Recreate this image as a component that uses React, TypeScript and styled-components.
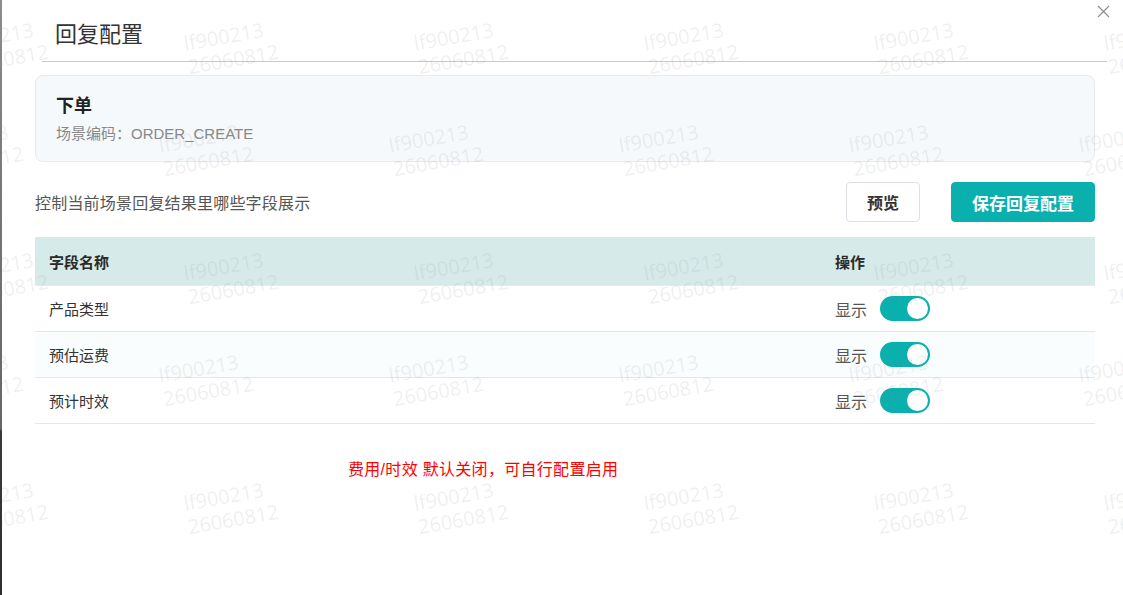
import React, { useState } from 'react'
import styled, { createGlobalStyle } from 'styled-components'

const GlobalStyle = createGlobalStyle`
  html, body {
    margin: 0;
    padding: 0;
  }
  body {
    width: 1123px;
    height: 595px;
    overflow: hidden;
    font-family: 'Liberation Sans', 'Noto Sans CJK SC', sans-serif;
    background: linear-gradient(
      180deg,
      #8c8c8c 0%,
      #767676 35%,
      #666 72%,
      #3a3a3a 72.5%,
      #2e2e2e 100%
    );
  }
`

type Field = { name: string; visible: boolean }

const initialFields: Field[] = [
  { name: '产品类型', visible: true },
  { name: '预估运费', visible: true },
  { name: '预计时效', visible: true },
]

const App = (): JSX.Element => {
  const [fields, setFields] = useState(initialFields)

  const toggle = (index: number) => {
    setFields(prev =>
      prev.map((f, i) => (i === index ? { ...f, visible: !f.visible } : f))
    )
  }

  // watermark stamps, two staggered rows per 230px block
  const stamps: { x: number; y: number }[] = []
  for (let k = 0; k < 3; k++) {
    for (let i = 0; i < 6; i++) {
      stamps.push({ x: -48 + 230 * i, y: 32 + 230 * k })
      if (k < 2) stamps.push({ x: -73 + 230 * i, y: 134 + 230 * k })
    }
  }

  return (
    <>
      <GlobalStyle />
      <Modal>
        <Header>
          <Title>回复配置</Title>
          <CloseButton aria-label="close">
            <svg width="13" height="13" viewBox="0 0 13 13">
              <path d="M1 1L12 12M12 1L1 12" stroke="#8f8f8f" strokeWidth="1.2" />
            </svg>
          </CloseButton>
        </Header>
        <Body>
          <SceneCard>
            <SceneName>下单</SceneName>
            <SceneCode>场景编码：ORDER_CREATE</SceneCode>
          </SceneCard>
          <Toolbar>
            <Hint>控制当前场景回复结果里哪些字段展示</Hint>
            <Actions>
              <Button>预览</Button>
              <Button $primary>保存回复配置</Button>
            </Actions>
          </Toolbar>
          <Table>
            <HeadRow>
              <Cell $head>字段名称</Cell>
              <Cell $head>操作</Cell>
            </HeadRow>
            {fields.map((f, i) => (
              <Row key={f.name} $striped={i % 2 === 1}>
                <Cell>{f.name}</Cell>
                <Cell>
                  <ShowLabel>显示</ShowLabel>
                  <Switch
                    role="switch"
                    aria-checked={f.visible}
                    $on={f.visible}
                    onClick={() => toggle(i)}
                  >
                    <Knob $on={f.visible} />
                  </Switch>
                </Cell>
              </Row>
            ))}
          </Table>
          <Note>费用/时效 默认关闭，可自行配置启用</Note>
        </Body>
        <Watermark>
          {stamps.map((s, i) => (
            <Stamp key={i} style={{ left: s.x, top: s.y }}>
              <span>lf900213</span>
              <span>26060812</span>
            </Stamp>
          ))}
        </Watermark>
      </Modal>
    </>
  )
}

export default App

const Modal = styled.div`
  position: relative;
  margin-left: 2px;
  width: 1121px;
  height: 595px;
  background: #fff;
  overflow: hidden;
`
const Header = styled.div`
  display: flex;
  justify-content: space-between;
  align-items: center;
  height: 61px;
  margin: 0 16px 0 40px;
  padding-left: 13px;
  border-bottom: 1px solid #c9c9c9;
`
const Title = styled.h2`
  margin: 3px 0 0;
  font-size: 22px;
  font-weight: 400;
  color: #333;
`
const CloseButton = styled.button`
  align-self: flex-start;
  margin: 5px -3px 0 0;
  padding: 0;
  width: 13px;
  height: 13px;
  border: none;
  background: none;
  display: flex;
  cursor: pointer;
`
const Body = styled.div`
  padding: 13px 28px 0 33px;
`
const SceneCard = styled.div`
  box-sizing: border-box;
  height: 87px;
  display: flex;
  flex-direction: column;
  justify-content: center;
  gap: 6px;
  padding: 1px 20px 0;
  background: #f5f9fc;
  border: 1px solid #e4ebf1;
  border-radius: 8px;
`
const SceneName = styled.div`
  font-size: 18px;
  line-height: 24px;
  font-weight: 700;
  color: #222;
`
const SceneCode = styled.div`
  font-size: 15px;
  line-height: 20px;
  color: #888;
`
const Toolbar = styled.div`
  display: flex;
  justify-content: space-between;
  align-items: center;
  margin-top: 20px;
`
const Hint = styled.p`
  margin: 0;
  font-size: 16px;
  letter-spacing: 0.2px;
  color: #555;
`
const Actions = styled.div`
  display: flex;
  gap: 31px;
`
const Button = styled.button<{ $primary?: boolean }>`
  box-sizing: border-box;
  height: 40px;
  padding: 0 20px;
  border-radius: 4px;
  font-family: inherit;
  font-size: ${p => (p.$primary ? '17px' : '16px')};
  font-weight: 700;
  border: 1px solid ${p => (p.$primary ? '#0ab0ae' : '#dcdfe6')};
  background: ${p => (p.$primary ? '#0ab0ae' : '#fff')};
  color: ${p => (p.$primary ? '#fff' : '#333')};
  cursor: pointer;
`
const Table = styled.div`
  margin-top: 15px;
`
const HeadRow = styled.div`
  display: grid;
  grid-template-columns: 1fr 274px;
  height: 48px;
  background: #d6eae9;
  border-bottom: 1px solid #e2eeee;
`
const Row = styled.div<{ $striped?: boolean }>`
  display: grid;
  grid-template-columns: 1fr 274px;
  height: 45px;
  background: ${p => (p.$striped ? '#f9fdfe' : '#fff')};
  border-bottom: 1px solid #e4e8ec;
`
const Cell = styled.div<{ $head?: boolean }>`
  display: flex;
  align-items: center;
  padding-left: 14px;
  font-size: 15px;
  font-weight: ${p => (p.$head ? 700 : 400)};
  color: ${p => (p.$head ? '#2a2a2a' : '#333')};
`
const ShowLabel = styled.span`
  font-size: 16px;
  color: #555;
  margin-right: 13px;
`
const Switch = styled.button<{ $on: boolean }>`
  position: relative;
  width: 50px;
  height: 25px;
  padding: 0;
  border: none;
  border-radius: 13px;
  background: ${p => (p.$on ? '#0ab0ae' : '#c9cdd4')};
  cursor: pointer;
`
const Knob = styled.span<{ $on: boolean }>`
  position: absolute;
  top: 2px;
  left: ${p => (p.$on ? '27px' : '2px')};
  width: 21px;
  height: 21px;
  border-radius: 50%;
  background: #fff;
`
const Note = styled.p`
  margin: 36px 0 0 313px;
  font-size: 16px;
  line-height: 20px;
  letter-spacing: 0.3px;
  color: #f00;
`
const Watermark = styled.div`
  position: absolute;
  inset: 0 0 0 -2px;
  pointer-events: none;
  overflow: hidden;
`
const Stamp = styled.div`
  position: absolute;
  display: flex;
  flex-direction: column;
  transform: rotate(-10deg);
  transform-origin: left top;
  font-family: 'Open Sans', sans-serif;
  font-size: 20px;
  line-height: 24px;
  color: rgba(140, 140, 140, 0.15);
  white-space: nowrap;
  user-select: none;
`
